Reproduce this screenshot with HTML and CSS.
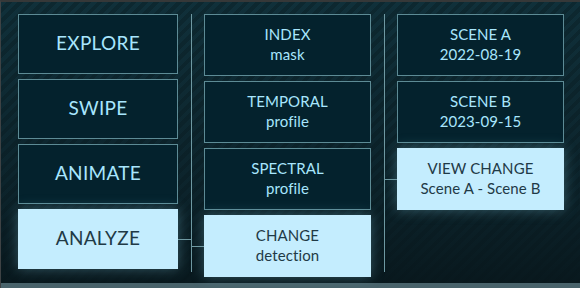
FILE: index.html
```html
<!DOCTYPE html>
<html lang="en">
<head>
    <meta charset="UTF-8">
    <meta name="viewport" content="width=device-width, initial-scale=1.0">
    <title>Analyze Workflow</title>
    <link rel="stylesheet" href="styles.css">
</head>
<body>
    <div class="frame">
        <div class="panel">
            <div class="column modes">
                <div class="tile big">EXPLORE</div>
                <div class="tile big">SWIPE</div>
                <div class="tile big">ANIMATE</div>
                <div class="tile big active link-right">ANALYZE</div>
            </div>

            <div class="divider"></div>

            <div class="column tools">
                <div class="tile">INDEX<br>mask</div>
                <div class="tile">TEMPORAL<br>profile</div>
                <div class="tile">SPECTRAL<br>profile</div>
                <div class="tile active link-left">CHANGE<br>detection</div>
            </div>

            <div class="divider"></div>

            <div class="column scenes">
                <div class="tile">SCENE A<br>2022-08-19</div>
                <div class="tile">SCENE B<br>2023-09-15</div>
                <div class="tile active link-left wide">VIEW CHANGE<br>Scene A - Scene B</div>
            </div>
        </div>
        <div class="statusbar"></div>
    </div>
</body>
</html>
```

FILE: styles.css
```css
body {
    margin: 0;
    padding: 0;
    font-family: Lato, "Open Sans", sans-serif;
    background-color: #0b1e25;
}

.frame {
    width: 580px;
    height: 288px;
    display: flex;
    flex-direction: column;
    border-top: 2px solid #363838;
    border-left: 1px solid #3e4244;
    box-sizing: border-box;
}

.panel {
    flex: 1;
    display: flex;
    align-items: flex-start;
    padding: 12px 0 0 17px;
    background-color: #0c2129;
    background-image:
        linear-gradient(to bottom, rgba(9, 24, 30, 0) 0%, rgba(9, 24, 30, 0.55) 70%, rgba(8, 22, 27, 0.9) 100%),
        repeating-linear-gradient(135deg, #10303a 0px, #10303a 4px, #0d2830 4px, #0d2830 8px);
}

.statusbar {
    height: 5px;
    background-color: #49636b;
}

.column {
    display: flex;
    flex-direction: column;
    gap: 5px;
}

.modes {
    width: 160px;
}

.tools,
.scenes {
    width: 167px;
}

.divider {
    width: 1px;
    height: 258px;
    margin: 0 12px 0 13px;
    background-color: #6f99a2;
}

.tile {
    position: relative;
    height: 62px;
    box-sizing: border-box;
    display: flex;
    align-items: center;
    justify-content: center;
    text-align: center;
    font-size: 15px;
    line-height: 20px;
    letter-spacing: 0.1px;
    padding-bottom: 3px;
    color: #a8e6fd;
    background-color: #04222d;
    border: 1px solid #5d8b95;
}

.tile.big {
    height: 60px;
    font-size: 19px;
    letter-spacing: 0.3px;
    padding-bottom: 2px;
}

.tile.active {
    color: #1f3a46;
    background-color: #c4edfe;
    border-color: #c4edfe;
    box-shadow: 0 0 12px rgba(130, 200, 222, 0.35);
}

.link-right::after {
    content: "";
    position: absolute;
    left: 100%;
    top: 50%;
    width: 13px;
    height: 1px;
    margin-left: 1px;
    background-color: #6f99a2;
}

.link-left::before {
    content: "";
    position: absolute;
    right: 100%;
    top: 50%;
    width: 12px;
    height: 1px;
    margin-right: 1px;
    background-color: #6f99a2;
}

.link-left.wide::before {
    width: 13px;
    top: 30px;
}
```
